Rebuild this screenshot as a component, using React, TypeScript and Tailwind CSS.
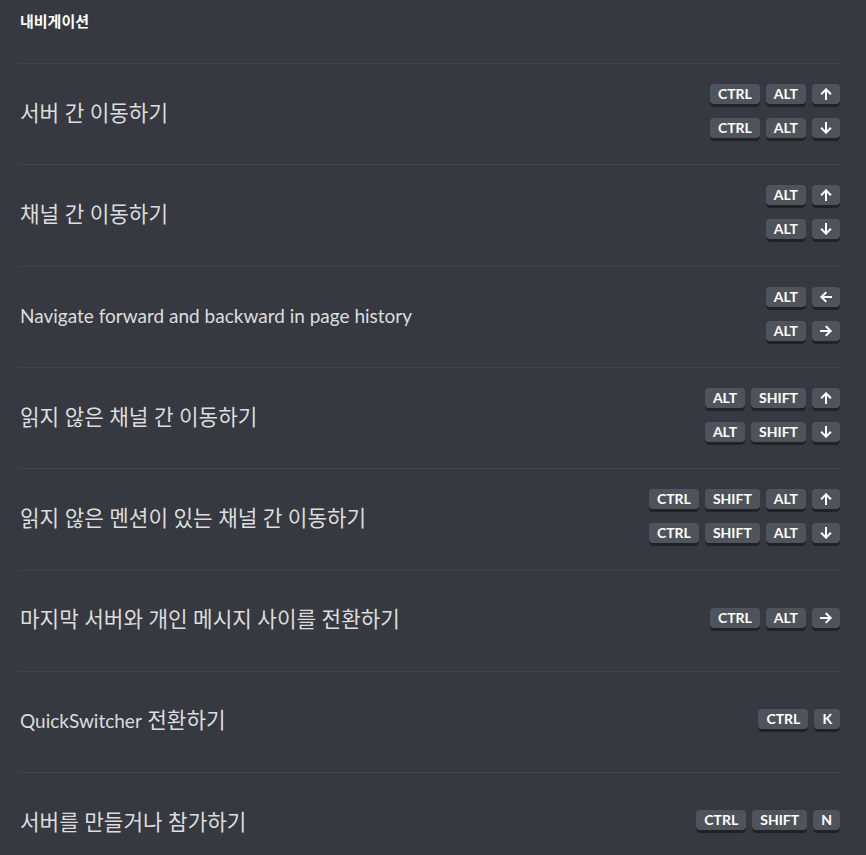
import React from "react";

type KeyName = string;

const rows: { label: string; combos: KeyName[][] }[] = [
  { label: "서버 간 이동하기", combos: [["CTRL", "ALT", "up"], ["CTRL", "ALT", "down"]] },
  { label: "채널 간 이동하기", combos: [["ALT", "up"], ["ALT", "down"]] },
  { label: "Navigate forward and backward in page history", combos: [["ALT", "left"], ["ALT", "right"]] },
  { label: "읽지 않은 채널 간 이동하기", combos: [["ALT", "SHIFT", "up"], ["ALT", "SHIFT", "down"]] },
  {
    label: "읽지 않은 멘션이 있는 채널 간 이동하기",
    combos: [["CTRL", "SHIFT", "ALT", "up"], ["CTRL", "SHIFT", "ALT", "down"]],
  },
  { label: "마지막 서버와 개인 메시지 사이를 전환하기", combos: [["CTRL", "ALT", "right"]] },
  { label: "QuickSwitcher 전환하기", combos: [["CTRL", "K"]] },
  { label: "서버를 만들거나 참가하기", combos: [["CTRL", "SHIFT", "N"]] },
];

const arrowPaths: Record<string, string> = {
  up: "M6 11V1.5M1.8 5.6L6 1.4l4.2 4.2",
  down: "M6 1v9.5M1.8 6.4L6 10.6l4.2-4.2",
  left: "M11 6H1.5M5.6 1.8L1.4 6l4.2 4.2",
  right: "M1 6h9.5M6.4 1.8L10.6 6l-4.2 4.2",
};

// latin runs render a bit smaller than hangul to match the original metrics
function Label({ text }: { text: string }) {
  const parts = text.match(/[A-Za-z]+(?:\s+[A-Za-z]+)*|[^A-Za-z]+/g) || [];
  return (
    <div className="text-[21.3px] leading-6 text-[#dcddde]">
      {parts.map((p, i) =>
        /[A-Za-z]/.test(p) ? (
          <span key={i} className="text-[19px]">
            {p}
          </span>
        ) : (
          <span key={i}>{p}</span>
        )
      )}
    </div>
  );
}

function Key({ name }: { name: KeyName }) {
  const arrow = arrowPaths[name];
  return (
    <div className="flex h-[23px] min-w-[25px] items-center justify-center rounded-[4px] bg-[#4f545c] px-2 pb-[3px] shadow-[inset_0_-3px_0_#202225] text-[14px] font-bold leading-none text-white">
      {arrow ? (
        <svg width="12" height="12" viewBox="0 0 12 12" fill="none" stroke="white" strokeWidth="2" strokeLinecap="square">
          <path d={arrow} />
        </svg>
      ) : (
        name
      )}
    </div>
  );
}

export default function App() {
  return (
    <div className="min-h-[855px] w-[866px] bg-[#36393f] pl-[19px] pr-[23px] font-['Lato','Noto_Sans_CJK_KR',sans-serif]">
      {/* Section header */}
      <div className="h-[63px] pl-[1px] pt-[11px] text-[15px] font-bold leading-5 text-white">
        내비게이션
      </div>

      {rows.map((row) => (
        <div
          key={row.label}
          className="flex h-[101.33px] items-center justify-between border-t border-[#42454a] pb-[3px] pl-[1px] pr-[3px]"
        >
          <Label text={row.label} />
          <div className="flex flex-col items-end gap-[11px]">
            {row.combos.map((combo, i) => (
              <div key={i} className="flex gap-[6px]">
                {combo.map((k, j) => (
                  <Key key={j} name={k} />
                ))}
              </div>
            ))}
          </div>
        </div>
      ))}
    </div>
  );
}
